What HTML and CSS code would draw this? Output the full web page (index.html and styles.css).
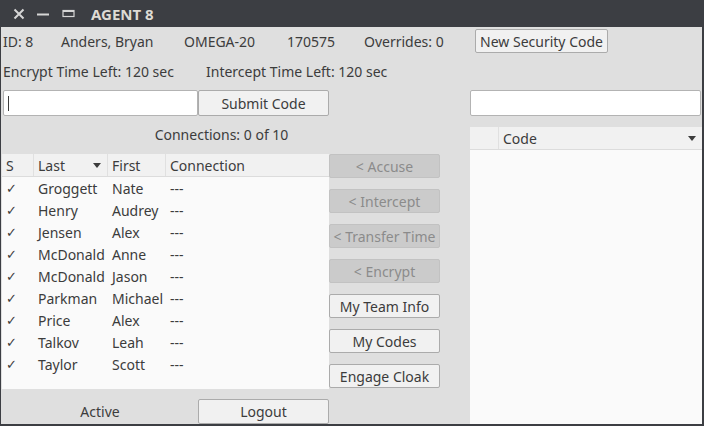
FILE: index.html
```html
<!DOCTYPE html>
<html>
<head>
<meta charset="utf-8">
<link rel="stylesheet" href="styles.css">
</head>
<body>
<div class="window">
  <div class="titlebar">
    <svg class="tb-icon" width="12" height="12" viewBox="0 0 12 12"><path d="M1.5 1.5 L10.5 10.5 M10.5 1.5 L1.5 10.5" stroke="#d6d6d6" stroke-width="2" fill="none"/></svg>
    <svg class="tb-icon" width="13" height="12" viewBox="0 0 13 12"><path d="M0 6.5 H12" stroke="#d6d6d6" stroke-width="2" fill="none"/></svg>
    <svg class="tb-icon" width="13" height="12" viewBox="0 0 13 12"><rect x="1" y="2.5" width="11" height="6" stroke="#d6d6d6" stroke-width="1.2" fill="none"/><rect x="1" y="2" width="11" height="2" fill="#d6d6d6"/></svg>
    <span class="tb-title">AGENT 8</span>
  </div>
  <div class="content">
    <div class="info-row">
      <span>ID: 8</span>
      <span>Anders, Bryan</span>
      <span>OMEGA-20</span>
      <span>170575</span>
      <span>Overrides: 0</span>
      <button class="btn btn-sec">New Security Code</button>
    </div>
    <div class="time-row">
      <span>Encrypt Time Left: 120 sec</span>
      <span>Intercept Time Left: 120 sec</span>
    </div>
    <div class="main">
      <div class="left">
        <div class="code-row">
          <div class="input input-code"><span class="caret"></span></div>
          <button class="btn btn-wide">Submit Code</button>
        </div>
        <div class="conn-label">Connections: 0 of 10</div>
        <div class="table-row">
          <div class="table">
            <div class="thead">
              <div class="th c-s">S</div>
              <div class="th c-last">Last<span class="arrow"></span></div>
              <div class="th c-first">First</div>
              <div class="th c-conn">Connection</div>
            </div>
            <div class="tbody">
              <div class="tr"><div class="td c-s">✓</div><div class="td c-last">Groggett</div><div class="td c-first">Nate</div><div class="td c-conn">---</div></div>
              <div class="tr"><div class="td c-s">✓</div><div class="td c-last">Henry</div><div class="td c-first">Audrey</div><div class="td c-conn">---</div></div>
              <div class="tr"><div class="td c-s">✓</div><div class="td c-last">Jensen</div><div class="td c-first">Alex</div><div class="td c-conn">---</div></div>
              <div class="tr"><div class="td c-s">✓</div><div class="td c-last">McDonald</div><div class="td c-first">Anne</div><div class="td c-conn">---</div></div>
              <div class="tr"><div class="td c-s">✓</div><div class="td c-last">McDonald</div><div class="td c-first">Jason</div><div class="td c-conn">---</div></div>
              <div class="tr"><div class="td c-s">✓</div><div class="td c-last">Parkman</div><div class="td c-first">Michael</div><div class="td c-conn">---</div></div>
              <div class="tr"><div class="td c-s">✓</div><div class="td c-last">Price</div><div class="td c-first">Alex</div><div class="td c-conn">---</div></div>
              <div class="tr"><div class="td c-s">✓</div><div class="td c-last">Talkov</div><div class="td c-first">Leah</div><div class="td c-conn">---</div></div>
              <div class="tr"><div class="td c-s">✓</div><div class="td c-last">Taylor</div><div class="td c-first">Scott</div><div class="td c-conn">---</div></div>
            </div>
          </div>
          <div class="actions">
            <button class="btn btn-act" disabled>&lt; Accuse</button>
            <button class="btn btn-act" disabled>&lt; Intercept</button>
            <button class="btn btn-act" disabled>&lt; Transfer Time</button>
            <button class="btn btn-act" disabled>&lt; Encrypt</button>
            <button class="btn btn-act">My Team Info</button>
            <button class="btn btn-act">My Codes</button>
            <button class="btn btn-act">Engage Cloak</button>
          </div>
        </div>
        <div class="bottom-row">
          <span class="status">Active</span>
          <button class="btn btn-wide">Logout</button>
        </div>
      </div>
      <div class="right">
        <div class="input input-right"></div>
        <div class="codes">
          <div class="thead">
            <div class="th c-idx"></div>
            <div class="th c-code">Code<span class="arrow"></span></div>
          </div>
          <div class="codes-body"></div>
        </div>
      </div>
    </div>
  </div>
</div>
</body>
</html>
```
FILE: styles.css
```css
* { box-sizing: border-box; }
html, body { margin: 0; padding: 0; }
body {
  width: 704px;
  height: 426px;
  overflow: hidden;
  font-family: "Noto Sans", "Open Sans", sans-serif;
  font-size: 14px;
  color: #3c3c3c;
}
.window {
  width: 704px;
  height: 426px;
  background: #3c3e43;
  display: flex;
  flex-direction: column;
}
.titlebar {
  height: 27px;
  flex: none;
  display: flex;
  align-items: center;
  padding-left: 13px;
  gap: 12px;
}
.tb-icon { display: block; }
.tb-title {
  margin-left: 4px;
  color: #dedbd4;
  font-weight: bold;
  font-size: 15px;
}
.content {
  flex: 1;
  background: #dfdfdf;
  margin: 0 2px 2px 1px;
  display: flex;
  flex-direction: column;
  min-height: 0;
}
.info-row {
  height: 26px;
  flex: none;
  display: grid;
  grid-template-columns: 58px 123px 103px 77px 111px auto;
  align-items: center;
  padding-left: 2px;
  padding-top: 2px;
}
.time-row {
  height: 37px;
  flex: none;
  display: grid;
  grid-template-columns: 203px auto;
  align-items: center;
  padding-left: 2px;
  padding-bottom: 1px;
}
.btn {
  font-family: inherit;
  font-size: 14px;
  color: #3c3c3c;
  background: #f1f1f1;
  border: 1px solid #ababab;
  border-radius: 2px;
  padding: 0;
  height: 24px;
  margin: 0;
  white-space: nowrap;
}
.btn:disabled {
  background: #cbcbcb;
  border-color: #c2c2c2;
  color: #8b8b8b;
}
.btn-sec { width: 133px; justify-self: start; }
.main {
  flex: 1;
  display: flex;
  min-height: 0;
}
.left {
  width: 440px;
  flex: none;
  padding-left: 1px;
  display: flex;
  flex-direction: column;
}
.code-row {
  display: flex;
  height: 26px;
  padding-left: 1px;
}
.input {
  background: #ffffff;
  border: 1px solid #b3b3b3;
  border-radius: 2px;
  height: 26px;
}
.input-code {
  width: 195px;
  padding: 5px 0 0 4px;
}
.caret {
  display: block;
  width: 1px;
  height: 15px;
  background: #3c3c3c;
}
.btn-wide {
  width: 131px;
  height: 26px;
}
.conn-label {
  height: 38px;
  display: flex;
  align-items: center;
  justify-content: center;
  padding-bottom: 1px;
}
.table-row {
  display: flex;
  height: 235px;
}
.table {
  width: 327px;
  background: #fafafa;
  display: flex;
  flex-direction: column;
}
.thead {
  display: flex;
  height: 23px;
  background: #f1f1f1;
  border-bottom: 1px solid #dcdcdc;
  flex: none;
}
.th {
  display: flex;
  align-items: center;
  padding-left: 4px;
  border-right: 1px solid #e0e0e0;
}
.th:last-child { border-right: none; }
.arrow {
  width: 0;
  height: 0;
  border-left: 4.5px solid transparent;
  border-right: 4.5px solid transparent;
  border-top: 5px solid #3c3c3c;
  margin-left: auto;
  margin-right: 6px;
  margin-top: 1px;
}
.c-s { width: 32px; }
.c-last { width: 74px; }
.c-first { width: 58px; }
.c-conn { flex: 1; }
.tr {
  display: flex;
  height: 22px;
  align-items: center;
}
.td { padding-left: 4px; white-space: nowrap; }
.tr .c-s { padding-left: 4px; font-size: 13px; }
.actions {
  width: 111px;
  display: flex;
  flex-direction: column;
  gap: 11px;
}
.btn-act { width: 111px; height: 24px; }
.bottom-row {
  display: flex;
  align-items: center;
  padding-top: 10px;
}
.status {
  width: 196px;
  text-align: center;
}
.bottom-row .btn-wide { height: 25px; }
.right {
  margin-left: 29px;
  flex: 1;
  display: flex;
  flex-direction: column;
}
.input-right { width: 231px; }
.codes {
  margin-top: 11px;
  flex: 1;
  background: #fafafa;
  display: flex;
  flex-direction: column;
}
.c-idx { width: 29px; }
.c-code { flex: 1; }
.c-code .arrow { margin-right: 6px; }
.codes-body { flex: 1; }
```
